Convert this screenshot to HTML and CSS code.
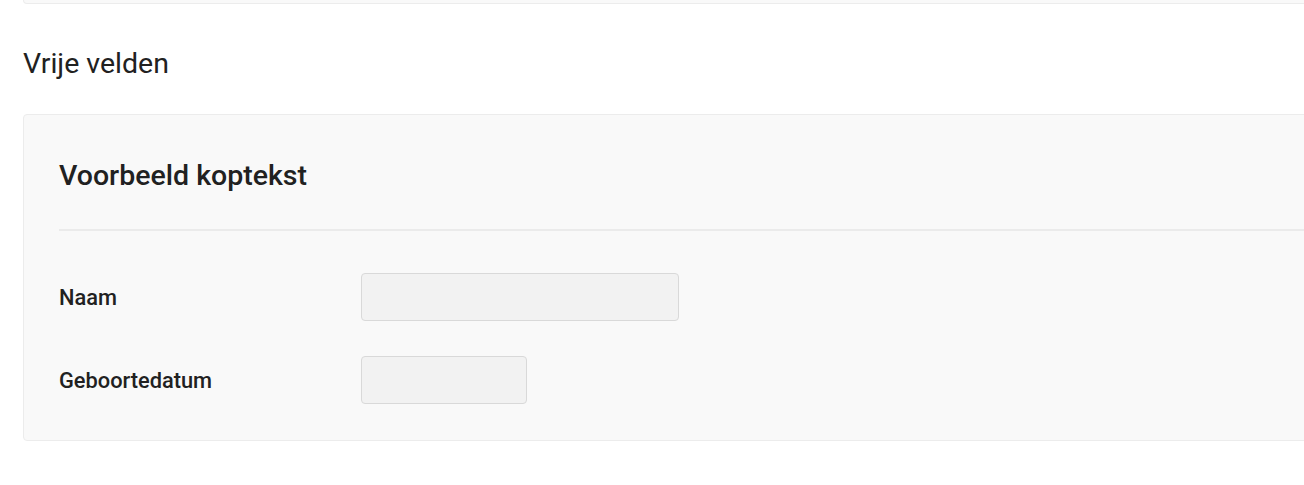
FILE: index.html
```html
<!DOCTYPE html>
<html lang="nl">
<head>
<meta charset="utf-8">
<title>Vrije velden</title>
<link rel="stylesheet" href="styles.css">
</head>
<body>
<div class="page">
  <div class="prev-panel"></div>
  <h2 class="section-title">Vrije velden</h2>
  <div class="panel">
    <h3 class="panel-title">Voorbeeld koptekst</h3>
    <div class="divider"></div>
    <div class="fields">
      <div class="field">
        <label class="field-label">Naam</label>
        <div class="input input-wide"></div>
      </div>
      <div class="field">
        <label class="field-label">Geboortedatum</label>
        <div class="input input-short"></div>
      </div>
    </div>
  </div>
</div>
</body>
</html>
```
FILE: styles.css
```css
* { box-sizing: border-box; }
html, body { margin: 0; padding: 0; background: #fff; }
body {
  font-family: Roboto, "Noto Sans", sans-serif;
  color: #212121;
  overflow: hidden;
}
.page {
  padding: 0 0 0 23px;
  width: 1340px;
}
.prev-panel {
  height: 4px;
  background: #f9f9f9;
  border: 1px solid #ececec;
  border-top: none;
  border-radius: 0 0 4px 4px;
}
.section-title {
  margin: 0;
  padding-top: 43px;
  height: 110px;
  font-size: 28.5px;
  font-weight: 400;
  line-height: 34px;
  color: #212121;
}
.panel {
  background: #f9f9f9;
  border: 1px solid #ececec;
  border-radius: 4px;
  padding: 0 0 36px 35px;
}
.panel-title {
  margin: 0;
  padding-top: 44px;
  height: 114px;
  font-size: 28.5px;
  font-weight: 500;
  line-height: 34px;
  color: #212121;
}
.divider {
  height: 2px;
  background: #ebebeb;
}
.fields {
  padding-top: 42px;
  display: flex;
  flex-direction: column;
  gap: 35px;
}
.field {
  display: flex;
  align-items: center;
  height: 48px;
}
.field-label {
  width: 302px;
  font-size: 21.8px;
  font-weight: 500;
  color: #212121;
}
.input {
  height: 48px;
  background: #f2f2f2;
  border: 1px solid #d9d9d9;
  border-radius: 4px;
}
.input-wide { width: 318px; }
.input-short { width: 166px; }
```
